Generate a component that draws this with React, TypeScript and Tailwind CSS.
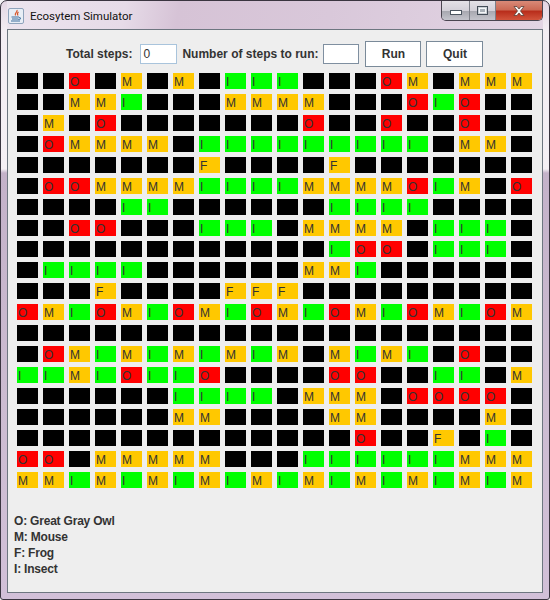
const board = [
  '__O_M_M_III___OM_MMM',
  '__MMI___MMMM___OIO__',
  '_M_O_______O__O__O__',
  '_OMMMM_IIIIIIIII_MM_',
  '_______F____F_______',
  '_OOMMMMIIIIMMMMOIM_O',
  '____II______IIII____',
  '__OO___III_MMMM_III_',
  '____________IOO_III_',
  '_IIII______MMI______',
  '___F____FFF_________',
  'OMIOMIOMIOMIOMIOMIOM',
  '____________________',
  '_OMIMIMIMIM_MIMI_O__',
  'IIMIOIIO____OO__II_M',
  '______IIII_MMM_OOOO_',
  '______MM____MM____M_',
  '_____________O__F_I_',
  'OO_MMMMM___IIIIIIMMM',
  'MMIMIMIMIMIMIMIMIMIM',
]

const cellColors: Record<string, string> = {
  _: 'bg-black',
  O: 'bg-[#ff0000]',
  M: 'bg-[#ffc800]',
  F: 'bg-[#ffc800]',
  I: 'bg-[#00ff00]',
}

function JavaIcon() {
  return (
    <svg width="16" height="16" viewBox="0 0 16 16" fill="none">
      <rect x="0.5" y="0.5" width="15" height="15" rx="1.5" fill="#e8eef6" stroke="#8fa3bb" />
      <path d="M9 2c1 2-3 3-1.500 5.500M10.500 4C9 5 9 6 10 7.500" stroke="#d8562a" strokeWidth="1.200" />
      <path d="M3.500 9h7.500M4 11h6.500M3 13h9M11 9.500c2 0 2 2-0.500 2" stroke="#3f6f9e" strokeWidth="1.100" />
    </svg>
  )
}

function MinIcon() {
  return (
    <svg width="14" height="8" viewBox="0 0 14 8">
      <rect x="1.500" y="1.500" width="11" height="4" fill="#fff" stroke="#4c5560" />
    </svg>
  )
}

function MaxIcon() {
  return (
    <svg width="14" height="12" viewBox="0 0 14 12" fill="none">
      <rect x="1.500" y="1.500" width="10" height="8" fill="#ccd0d6" stroke="#434c57" />
      <rect x="3.500" y="3.500" width="6" height="4" fill="#a9b0b8" stroke="#f4f6f8" />
    </svg>
  )
}

function CloseIcon() {
  return (
    <svg width="16" height="12" viewBox="0 0 16 12" fill="none">
      <path d="M3 1.500h3l2 2.500 2-2.500h3l-3.500 4.500 3.500 4.500h-3l-2-2.500-2 2.500h-3l3.500-4.500z" fill="#f7f5f3" stroke="#5a4038" strokeWidth="0.800" />
    </svg>
  )
}

function Cell({ kind }: { kind: string }) {
  return (
    <div className={`h-4 w-[21px] overflow-hidden pl-[1px] text-[12px] font-normal leading-[19px] text-[#333333] ${cellColors[kind]}`}>
      {kind === '_' ? '' : kind}
    </div>
  )
}

export default function App() {
  return (
    <div className="h-[600px] w-[550px] bg-[#f4f2f5] font-['Liberation_Sans',Arial,sans-serif]">
      <div className="flex h-full flex-col rounded-t-[7px] rounded-b-[3px] border border-[#3a3540] bg-[linear-gradient(to_bottom,#e4d6e4_0px,#f3edf3_30px,#f5f0f5_168px,#c4b2c9_172px,#ccbcd1_400px,#d2c0d8_600px)] px-[6px] pb-[6px]">
        <div className="flex h-[28px] items-start justify-between bg-[linear-gradient(100deg,#ece4ee_0%,#e6dbe8_22%,#d6c3d6_32%,#d9c8da_60%,#e2d4e3_100%)]">
          <div className="flex items-center gap-[6px] pl-[1px] pt-[7px]">
            <JavaIcon />
            <span className="font-['Roboto',sans-serif] text-[11.5px] leading-[16px] text-[#111111]">Ecosytem Simulator</span>
          </div>
          <div className="flex h-[20px] w-[102px] overflow-hidden rounded-b-[5px] border border-t-0 border-[#4a4550]">
            <div className="flex w-[28px] items-center justify-center border-r border-[#7d7f88] bg-[linear-gradient(to_bottom,#e4e1e7_0%,#d3d0d8_50%,#a8a8b0_55%,#c4c4cc_100%)] pt-[4px]">
              <MinIcon />
            </div>
            <div className="flex w-[26px] items-center justify-center border-r border-[#7d7f88] bg-[linear-gradient(to_bottom,#e4e1e7_0%,#d3d0d8_50%,#a8a8b0_55%,#c4c4cc_100%)]">
              <MaxIcon />
            </div>
            <div className="flex flex-1 items-center justify-center bg-[linear-gradient(to_bottom,#d98a78_0%,#cc6a55_45%,#b92e1c_55%,#d2543c_100%)]">
              <CloseIcon />
            </div>
          </div>
        </div>

        <div className="flex-1 border border-[#6d7680] bg-[#eeeeee] text-[12px] font-bold text-[#333333]">
          <div className="flex h-[43px] items-center pl-[58px] pt-[5px]">
            <span>Total steps:</span>
            <div className="ml-[8px] h-[20px] w-[37px] border border-[#a9c4dc] bg-white pl-[2px] text-[12px] font-normal leading-[19px]">0</div>
            <span className="ml-[5px]">Number of steps to run:</span>
            <div className="ml-[5px] h-[20px] w-[36px] border border-[#7f8fa0] bg-white" />
            <button className="ml-[6px] h-[26px] w-[56px] border border-[#7a8a99] bg-white">Run</button>
            <button className="ml-[5px] h-[26px] w-[57px] border border-[#7a8a99] bg-white">Quit</button>
          </div>

          <div className="grid grid-cols-[repeat(20,21px)] gap-x-[5px] gap-y-[5px] pl-[9px]">
            {board.flatMap((row, r) => row.split('').map((kind, c) => <Cell key={`${r}-${c}`} kind={kind} />))}
          </div>

          <div className="pl-[6px] pt-[25px] leading-[16px] tracking-[-0.2px]">
            <div>O: Great Gray Owl</div>
            <div>M: Mouse</div>
            <div>F: Frog</div>
            <div>I: Insect</div>
          </div>
        </div>
      </div>
    </div>
  )
}
